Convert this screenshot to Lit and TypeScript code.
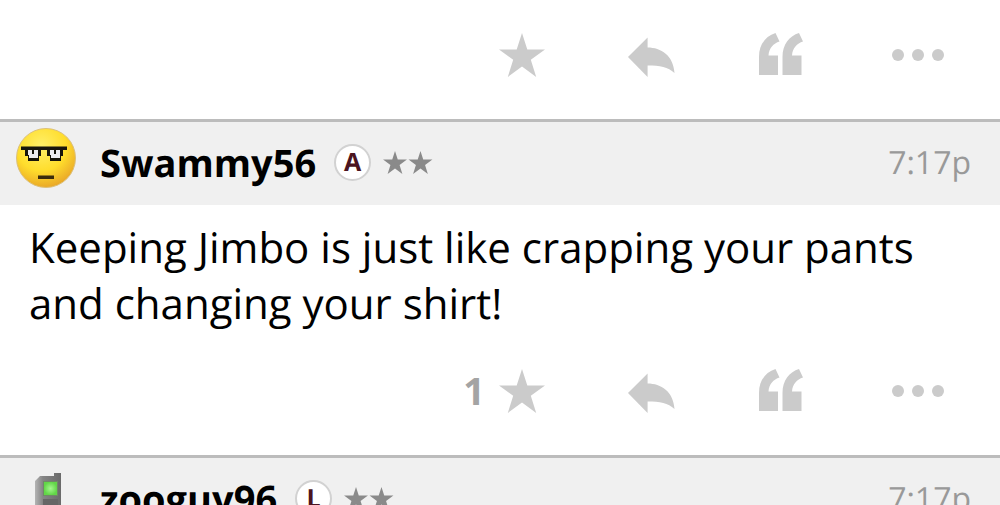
import { LitElement, html, svg, css, nothing } from "lit";
import { customElement, property } from "lit/decorators.js";

const STAR = "M25 2 L30.3 18.5 L48 18.5 L33.8 28.8 L39.2 46 L25 35.6 L10.8 46 L16.2 28.8 L2 18.5 L19.7 18.5 Z";
const QUOTE = "M2 44 V26 C2 13 9 5 18.5 2 L22.5 10.5 C16.5 12.5 12 17 11.5 24.5 H21 V44 Z";

const smiley = svg`
  <defs>
    <radialGradient id="skin" cx="0.42" cy="0.3" r="0.7">
      <stop offset="0" stop-color="#fff06a" />
      <stop offset="0.6" stop-color="#ffdd2c" />
      <stop offset="1" stop-color="#eaa928" />
    </radialGradient>
  </defs>
  <circle cx="30" cy="30" r="29.5" fill="url(#skin)" stroke="#dcc07a" stroke-width="1" />
  <path d="M5 18.5h46v3.5h-46z M9 21h16v7h-2v5h-11v-5h-3z M31 21h16v7h-2v5h-11v-5h-3z" fill="#17150c" />
  <path d="M12 22h4v4h2v-4h4v8h-9v-3h-1z M34 22h4v4h2v-4h4v8h-9v-3h-1z" fill="#ececf0" />
  <rect x="22" y="47.5" width="16" height="3.5" fill="#3b2c0c" />
`;

const phone = svg`
  <defs>
    <linearGradient id="shell">
      <stop offset="0" stop-color="#b4b4b4" />
      <stop offset="0.3" stop-color="#858585" />
      <stop offset="1" stop-color="#6a6a6a" />
    </linearGradient>
    <radialGradient id="screen">
      <stop offset="0" stop-color="#a5f78e" />
      <stop offset="1" stop-color="#62d648" />
    </radialGradient>
  </defs>
  <path d="M24 12 H38 V9 H45 V60 H19 V17 Z" fill="url(#shell)" />
  <rect x="27" y="17" width="15" height="15" fill="#6f8a66" />
  <rect x="28" y="18" width="13" height="13" fill="url(#screen)" />
  <rect x="27" y="35" width="15" height="25" fill="#666" />
`;

@customElement("post-actions")
class PostActions extends LitElement {
  @property({ type: Number }) likes = 0;

  static styles = css`
    :host { display: block; }
    .bar { display: flex; justify-content: flex-end; align-items: center; gap: 82px; padding-right: 51px; }
    .vote { display: flex; align-items: center; gap: 12px; }
    .count { color: #a4a4a4; font-family: "Noto Sans", sans-serif; font-size: 38px; line-height: 48px; font-weight: 700; }
    .btn { display: block; margin: 0; padding: 0; border: 0; background: none; cursor: pointer; }
    .icon { display: block; fill: #cbcbcb; }
  `;

  render() {
    return html`<div class="bar">
      <div class="vote">
        ${this.likes ? html`<span class="count">${this.likes}</span>` : nothing}
        <button class="btn" aria-label="Like">
          <svg class="icon" width="48" height="48" viewBox="0 0 48 48"><path d=${STAR} /></svg>
        </button>
      </div>
      <button class="btn" aria-label="Reply">
        <svg class="icon" width="48" height="48" viewBox="0 0 48 48">
          <path d="M1 26 L20.6 6.5 V16.5 C34 16.5 46.5 24.5 47.5 42 C41 36 33 34.5 20.6 34.5 V46 Z" />
        </svg>
      </button>
      <button class="btn" aria-label="Quote">
        <svg class="icon" width="48" height="48" viewBox="0 0 48 48">
          <path d=${QUOTE} /><path transform="translate(23.5 0)" d=${QUOTE} />
        </svg>
      </button>
      <button class="btn" aria-label="More">
        <svg class="icon" width="62" height="48" viewBox="0 0 62 48">
          <circle cx="11" cy="24" r="6" /><circle cx="31" cy="24" r="6" /><circle cx="51" cy="24" r="6" />
        </svg>
      </button>
    </div>`;
  }
}

@customElement("post-header")
class PostHeader extends LitElement {
  @property() name = "";
  @property() badge = "";
  @property() time = "";
  @property() avatar = "";

  static styles = css`
    :host { display: block; }
    .head {
      display: flex; align-items: center; height: 81px; padding: 0 29px 2px 16px;
      border-top: 3px solid #bcbcbc; background: #f0f0f0;
    }
    .avatar { flex: none; margin: 0 24px 10px 0; }
    .name { color: #000; font-size: 38px; line-height: 50px; font-weight: 700; text-decoration: none; }
    .badge {
      flex: none; display: grid; place-items: center; width: 33px; height: 33px; margin: 0 11px 0 18px;
      border: 2px solid #d2d2d2; border-radius: 50%; background: #fff;
      color: #4b1420; font-size: 25px; line-height: 33px; font-weight: 700;
    }
    .stars { flex: none; fill: #8a8a8a; }
    .time { margin-left: auto; color: #999; font-size: 32px; line-height: 44px; }
  `;

  render() {
    return html`<header class="head">
      <svg class="avatar" width="60" height="60" viewBox="0 0 60 60" aria-hidden="true">
        ${this.avatar === "phone" ? phone : smiley}
      </svg>
      <a class="name" href="#">${this.name}</a>
      <span class="badge">${this.badge}</span>
      <svg class="stars" width="52" height="26" viewBox="0 0 100 50" aria-hidden="true">
        <path d=${STAR} /><path transform="translate(49 0)" d=${STAR} />
      </svg>
      <time class="time">${this.time}</time>
    </header>`;
  }
}

@customElement("app-root")
class AppRoot extends LitElement {
  static styles = css`
    :host {
      display: block; height: 100vh; overflow: hidden; background: #fff; color: #000;
      font-family: "Open Sans", "Noto Sans", sans-serif; text-rendering: geometricPrecision;
    }
    .previous { padding: 31px 0 40px; }
    .body { margin: 0; padding: 15px 29px 35px; font-size: 42px; line-height: 56px; }
    .foot { padding-bottom: 40px; }
  `;

  render() {
    return html`<main>
      <article class="previous"><post-actions></post-actions></article>
      <article>
        <post-header name="Swammy56" badge="A" time="7:17p" avatar="smiley"></post-header>
        <p class="body">Keeping Jimbo is just like crapping your pants and changing your shirt!</p>
        <post-actions class="foot" .likes=${1}></post-actions>
      </article>
      <article>
        <post-header name="zooguy96" badge="L" time="7:17p" avatar="phone"></post-header>
      </article>
    </main>`;
  }
}
